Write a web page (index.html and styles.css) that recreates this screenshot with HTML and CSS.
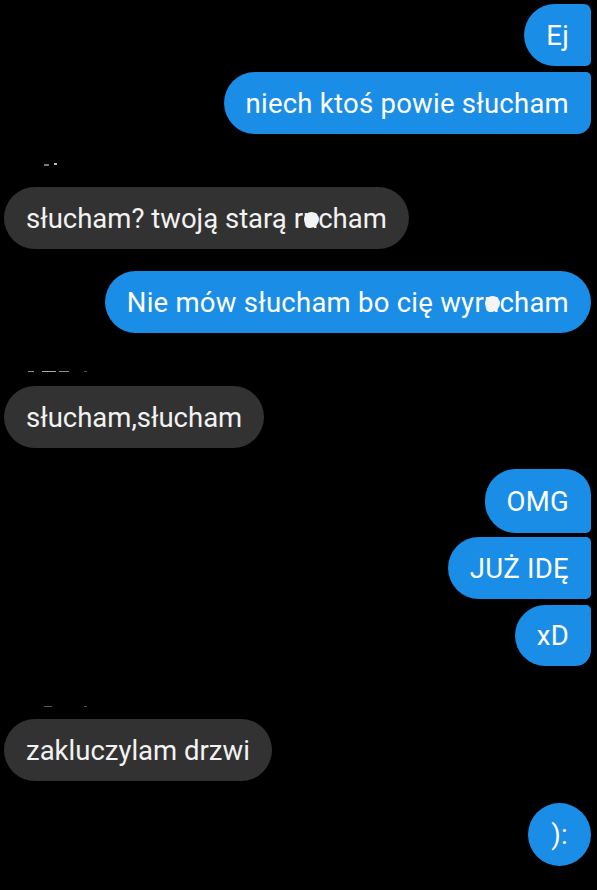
FILE: index.html
```html
<!DOCTYPE html>
<html lang="pl">
<head>
<meta charset="utf-8">
<link rel="stylesheet" href="styles.css">
</head>
<body>
<div class="chat">
  <div class="msg out first-top"><div class="bubble b-ej">Ej</div></div>
  <div class="msg out gap6"><div class="bubble b-niech">niech ktoś powie słucham</div></div>

  <div class="sender"><span class="speck s1"></span><span class="speck s2"></span></div>
  <div class="msg in"><div class="bubble gray">słucham? twoją starą r<span class="blot">u</span>cham</div></div>

  <div class="msg out gap22"><div class="bubble">Nie mów słucham bo cię wyr<span class="blot">u</span>cham</div></div>

  <div class="sender s-wide"><span class="speck w1"></span><span class="speck w2"></span><span class="speck w3"></span><span class="speck w4"></span></div>
  <div class="msg in"><div class="bubble gray">słucham,słucham</div></div>

  <div class="msg out gap21"><div class="bubble b-omg">OMG</div></div>
  <div class="msg out gap4"><div class="bubble b-mid">JUŻ IDĘ</div></div>
  <div class="msg out gap6"><div class="bubble b-last">xD</div></div>

  <div class="sender s-third"><span class="speck t1"></span><span class="speck t2"></span></div>
  <div class="msg in"><div class="bubble gray">zakluczylam drzwi</div></div>

  <div class="msg out gap22"><div class="bubble round">):</div></div>
</div>
</body>
</html>
```

FILE: styles.css
```css
html, body {
  margin: 0;
  padding: 0;
  background: #000;
}
body {
  width: 597px;
  height: 890px;
  overflow: hidden;
  font-family: Roboto, "Noto Sans", "Liberation Sans", sans-serif;
}
.chat {
  display: flex;
  flex-direction: column;
  padding: 4px 6px 0 4px;
}
.msg {
  display: flex;
}
.msg.out { justify-content: flex-end; }
.msg.in { justify-content: flex-start; }
.gap4 { margin-top: 4px; }
.gap6 { margin-top: 6px; }
.gap21 { margin-top: 21px; }
.gap22 { margin-top: 22px; }

.bubble {
  box-sizing: border-box;
  height: 62px;
  padding: 0 22px;
  display: flex;
  align-items: center;
  border-radius: 31px;
  background: #1a8de6;
  color: #fff;
  font-size: 27.5px;
  letter-spacing: 0.25px;
  white-space: nowrap;
}
.bubble.gray {
  background: #323232;
  color: #f2f2f2;
  letter-spacing: 0;
}
.b-ej { border-radius: 31px 7px 5px 31px; }
.b-niech { border-radius: 31px 5px 14px 31px; }
.b-omg { border-radius: 31px 26px 5px 31px; height: 64px; }
.b-mid { border-radius: 31px 5px 5px 31px; }
.b-last { border-radius: 31px 5px 16px 31px; height: 61px; }
.round {
  width: 63px;
  height: 63px;
  padding: 0;
  justify-content: center;
  border-radius: 50%;
}

.blot {
  position: relative;
}
.blot::after {
  content: "";
  position: absolute;
  left: 50%;
  top: 50%;
  width: 15px;
  height: 15px;
  margin: -6px 0 0 -7px;
  border-radius: 50%;
  background: #f4f4f4;
}

.sender {
  position: relative;
  height: 53px;
}
.speck {
  position: absolute;
  height: 2px;
  background: #8a8a8a;
}
.s1 { left: 40px; top: 30px; width: 5px; background: #777; }
.s2 { left: 50px; top: 29px; width: 3px; background: #bbb; }
.s-wide .speck { top: 38px; height: 1px; }
.w1 { left: 24px; width: 6px; }
.w2 { left: 38px; width: 14px; background: #aaa !important; }
.w3 { left: 55px; width: 10px; }
.w4 { left: 80px; width: 3px; background: #555 !important; }
.s-third .speck { top: 40px; height: 1px; background: #555; }
.t1 { left: 40px; width: 8px; }
.t2 { left: 80px; width: 3px; }
```
